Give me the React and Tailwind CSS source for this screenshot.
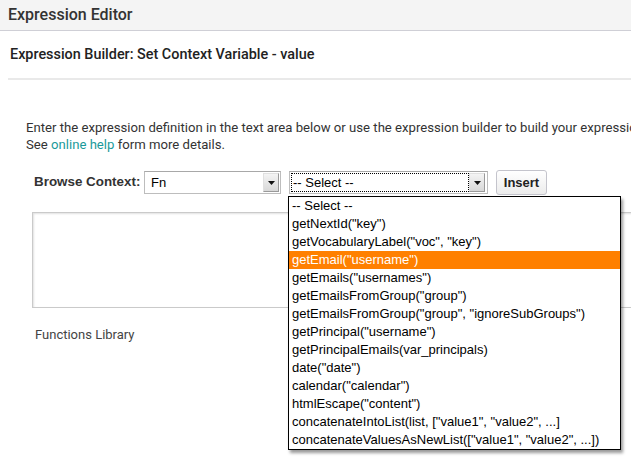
const options = [
  '-- Select --',
  'getNextId("key")',
  'getVocabularyLabel("voc", "key")',
  'getEmail("username")',
  'getEmails("usernames")',
  'getEmailsFromGroup("group")',
  'getEmailsFromGroup("group", "ignoreSubGroups")',
  'getPrincipal("username")',
  'getPrincipalEmails(var_principals)',
  'date("date")',
  'calendar("calendar")',
  'htmlEscape("content")',
  'concatenateIntoList(list, ["value1", "value2", ...]',
  'concatenateValuesAsNewList(["value1", "value2", ...])',
];

const Arrow = () => (
  <div className="w-[16px] h-[19px] mr-[1px] flex items-center justify-center bg-gradient-to-b from-[#f4f4f4] to-[#d8d8d8] border border-[#9a9a9a] border-t-[#e0e0e0] border-l-[#e0e0e0]">
    <svg width="7" height="4" viewBox="0 0 7 4">
      <path d="M0 0h7L3.5 4z" fill="#111" />
    </svg>
  </div>
);

const App = () => {
  return (
    <div className="relative w-[631px] h-[459px] overflow-hidden bg-white font-['Roboto',sans-serif] text-[#333]">
      {/* Header */}
      <div className="h-[31px] bg-[#f4f4f4] border-b border-[#cfcfd6] px-2 flex items-center">
        <span className="text-[16px] font-medium text-[#333]">Expression Editor</span>
      </div>

      <div className="ml-2 h-[49px] border-b-2 border-[#e9e9e9] flex items-center pl-[2px]">
        <span className="text-[14.4px] font-medium text-[#222]">Expression Builder: Set Context Variable - value</span>
      </div>

      <div className="w-[900px]">
        <p className="mt-[39px] pl-[26px] text-[13.15px] leading-[17px] text-[#333] whitespace-nowrap">
          Enter the expression definition in the text area below or use the expression builder to build your expression.
          <br />
          See <a className="text-[#1a9a9a]">online help</a> form more details.
        </p>

        {/* Browse row */}
        <div className="mt-[17px] pl-[34px] flex items-center font-['Liberation_Sans',Arial,sans-serif] text-[13px] text-black">
          <span className="font-bold text-[#333] text-[13.4px] w-[105px] shrink-0 whitespace-nowrap">Browse Context:</span>
          <div className="ml-[5px] w-[137px] h-[23px] shrink-0 border border-[#bdbdbd] border-t-[#a8a8a8] bg-white flex items-center justify-between">
            <span className="pl-[6px]">Fn</span>
            <Arrow />
          </div>
          <div className="ml-[8px] w-[199px] h-[23px] shrink-0 border border-[#bdbdbd] border-t-[#a8a8a8] bg-white flex items-center justify-between p-[1px]">
            <div className="flex-1 h-full border border-dotted border-black flex items-center pl-[1px]">-- Select --</div>
            <Arrow />
          </div>
          <button className="ml-[8px] w-[51px] h-[25px] shrink-0 rounded-[3px] border border-[#c4c4cc] bg-gradient-to-b from-white to-[#ececec] font-bold text-[#222] text-[13px]">
            Insert
          </button>
        </div>

        {/* Textarea */}
        <div className="mt-[17px] ml-[32px] h-[96px] border border-[#cacaca] shadow-[inset_1px_1px_2px_rgba(0,0,0,0.12)]" />

        <div className="mt-[17px] pl-[35px] text-[13px] text-[#444]">Functions Library</div>
      </div>

      {/* Open dropdown list */}
      <ul className="absolute left-[288px] top-[196px] w-[333px] border border-black bg-white shadow-[2px_3px_3px_rgba(0,0,0,0.4)] font-['Liberation_Sans',Arial,sans-serif] text-[13px] text-black">
        {options.map((opt, i) => (
          <li
            key={i}
            className={`h-[18px] leading-[18px] pl-[3px] whitespace-nowrap ${i === 3 ? 'bg-[#ff8000] text-white' : ''}`}
          >
            {opt}
          </li>
        ))}
      </ul>
    </div>
  );
};

export default App;
